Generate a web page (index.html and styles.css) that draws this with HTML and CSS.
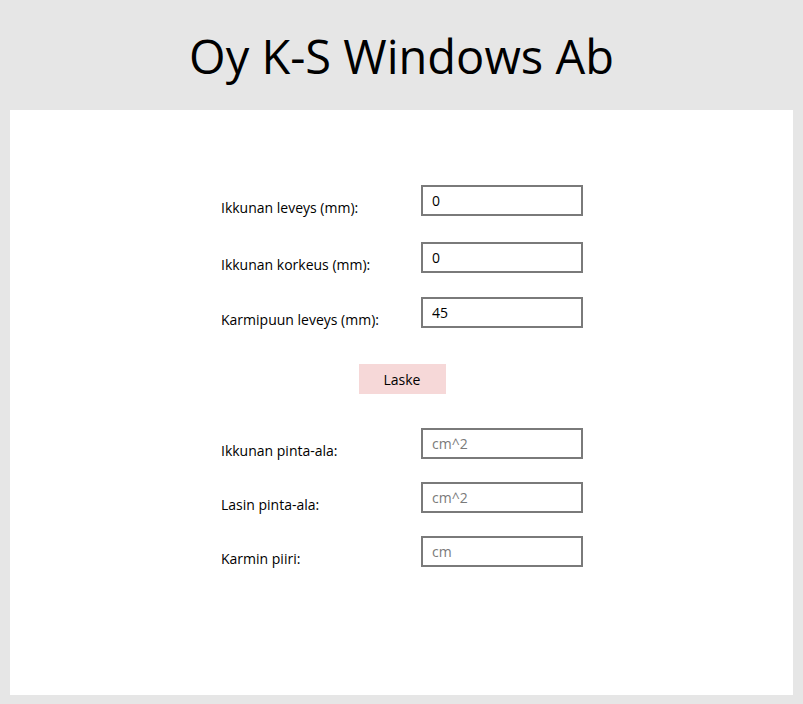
FILE: index.html
```html
<!DOCTYPE html>
<html lang="fi">
<head>
<meta charset="utf-8">
<title>Oy K-S Windows Ab</title>
<link rel="stylesheet" href="styles.css">
</head>
<body>
<header class="header">
  <h1 class="title">Oy K-S Windows Ab</h1>
</header>
<main class="panel">
  <form class="form">
    <div class="row row-1">
      <label class="label" for="w">Ikkunan leveys (mm):</label>
      <input class="field" id="w" type="text" value="0">
    </div>
    <div class="row row-2">
      <label class="label" for="h">Ikkunan korkeus (mm):</label>
      <input class="field" id="h" type="text" value="0">
    </div>
    <div class="row row-3">
      <label class="label" for="k">Karmipuun leveys (mm):</label>
      <input class="field" id="k" type="text" value="45">
    </div>
    <div class="actions">
      <button class="button" type="button">Laske</button>
    </div>
    <div class="row row-4">
      <label class="label" for="a">Ikkunan pinta-ala:</label>
      <input class="field" id="a" type="text" placeholder="cm^2">
    </div>
    <div class="row row-5">
      <label class="label" for="g">Lasin pinta-ala:</label>
      <input class="field" id="g" type="text" placeholder="cm^2">
    </div>
    <div class="row row-6">
      <label class="label" for="p">Karmin piiri:</label>
      <input class="field" id="p" type="text" placeholder="cm">
    </div>
  </form>
</main>
</body>
</html>
```

FILE: styles.css
```css
html, body {
  margin: 0;
  padding: 0;
  background: #e6e6e6;
  font-family: "Open Sans", "Noto Sans", sans-serif;
  color: #000;
}

.header {
  height: 110px;
  display: flex;
  align-items: center;
  justify-content: center;
}

.title {
  margin: 0;
  font-size: 47px;
  font-weight: 400;
  line-height: 56px;
  padding-top: 2px;
}

.panel {
  background: #fff;
  margin: 0 10px;
  height: 585px;
  display: flex;
  justify-content: center;
}

.form {
  width: 362px;
  padding-top: 75px;
  padding-left: 1px;
  display: flex;
  flex-direction: column;
}

.row {
  display: flex;
  align-items: flex-start;
  height: 31px;
}

.row-2 { margin-top: 26px; }
.row-3 { margin-top: 24px; }
.row-5, .row-6 { margin-top: 23px; }

.label {
  width: 200px;
  font-size: 14px;
  line-height: 17px;
  padding-top: 14px;
}

.field {
  box-sizing: border-box;
  width: 162px;
  height: 31px;
  border: 2px solid #7a7a7a;
  padding: 0 9px;
  font-family: inherit;
  font-size: 14px;
  color: #000;
  background: #fff;
  outline: none;
}

.field::placeholder {
  color: #7a7a7a;
}

.actions {
  display: flex;
  justify-content: center;
  margin-top: 36px;
  margin-bottom: 34px;
}

.button {
  width: 87px;
  height: 30px;
  border: none;
  background: #f6d8d8;
  font-family: inherit;
  font-size: 14px;
  color: #000;
  padding: 0;
}
```
